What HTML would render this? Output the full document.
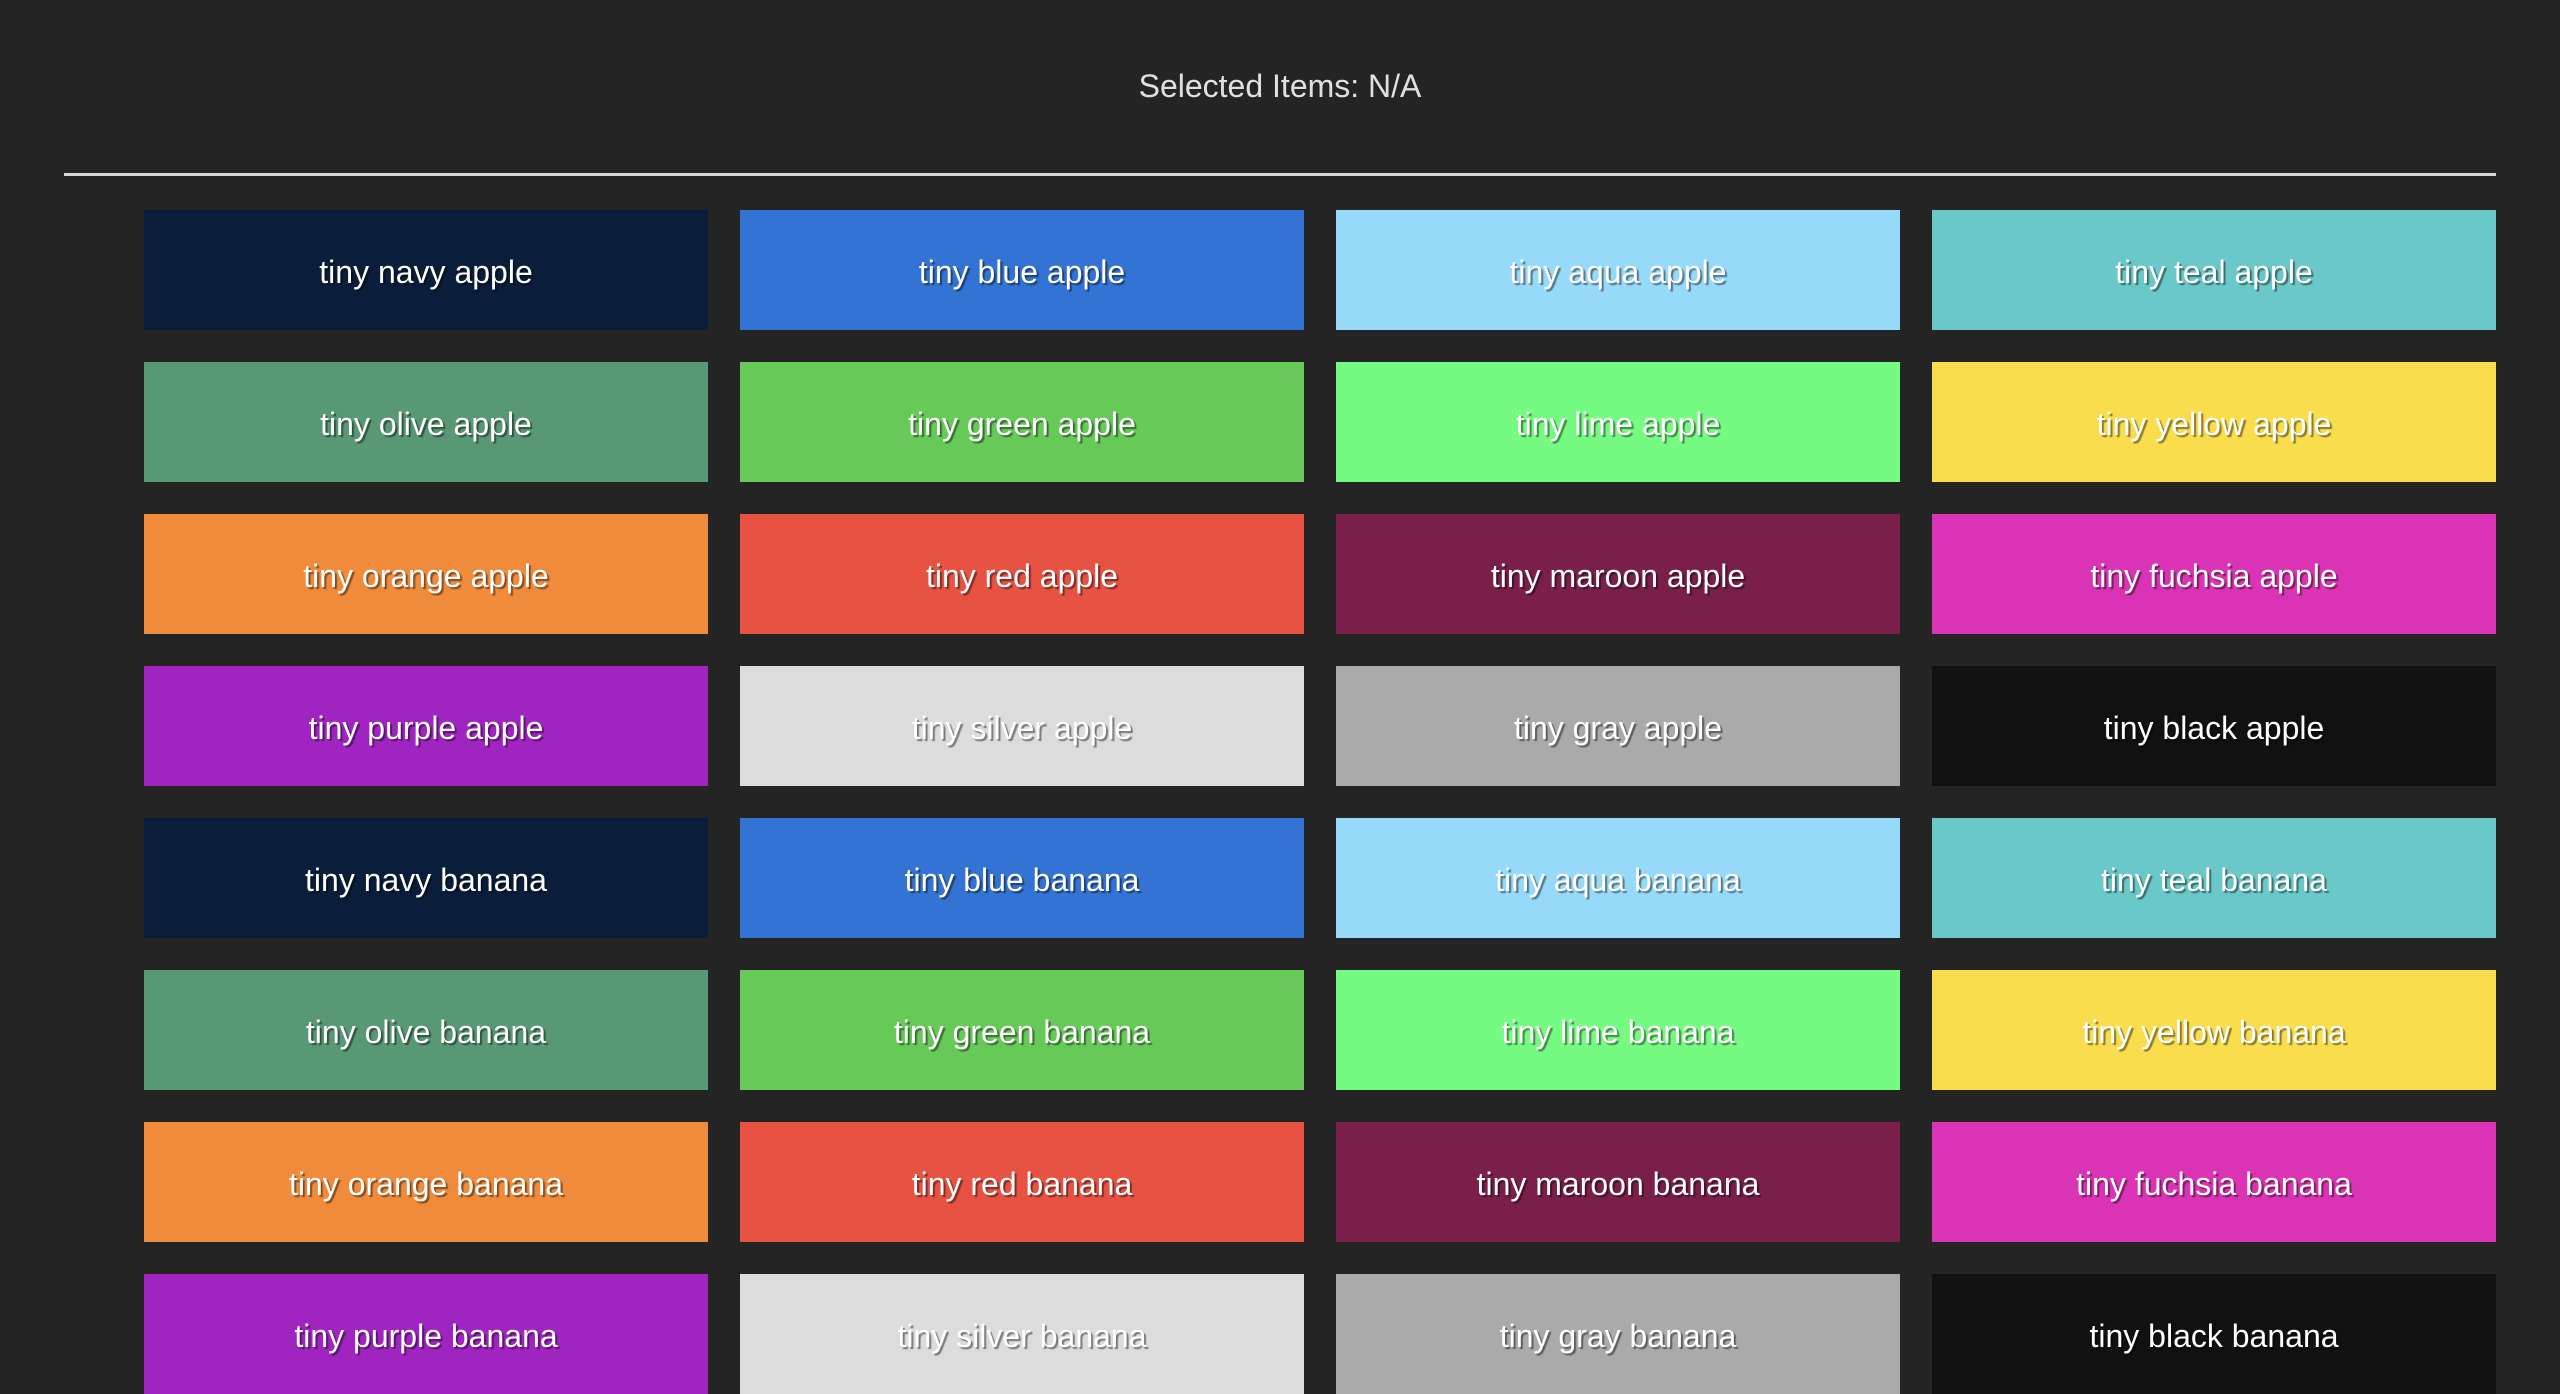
<!DOCTYPE html>
<html><head><meta charset="utf-8"><style>
html,body{margin:0;padding:0;background:#242424;width:2560px;height:1354px;overflow:hidden;font-family:"Liberation Sans",sans-serif;}
.hdr{position:absolute;top:62px;left:0;width:2560px;text-align:center;color:#e0e0e0;font-size:32px;line-height:48px;}
.line{position:absolute;left:64px;top:173px;width:2432px;height:3px;background:#d8d8d8;}
.grid{position:absolute;left:144px;top:210px;display:grid;grid-template-columns:repeat(4,564px);grid-auto-rows:120px;gap:32px;}
.t{display:flex;align-items:center;justify-content:center;color:#fff;font-size:32px;padding-top:4px;box-sizing:border-box;text-shadow:2px 2px 1px rgba(0,0,0,0.45);}
</style></head><body>
<div class="hdr">Selected Items: N/A</div>
<div class="line"></div>
<div class="grid">
<div class="t" style="background:#0a1e3c">tiny navy apple</div>
<div class="t" style="background:#3373d3">tiny blue apple</div>
<div class="t" style="background:#97d9f9">tiny aqua apple</div>
<div class="t" style="background:#6ac8c9">tiny teal apple</div>
<div class="t" style="background:#589875">tiny olive apple</div>
<div class="t" style="background:#66c958">tiny green apple</div>
<div class="t" style="background:#76fb82">tiny lime apple</div>
<div class="t" style="background:#f9dd4d">tiny yellow apple</div>
<div class="t" style="background:#ef8b3b">tiny orange apple</div>
<div class="t" style="background:#e85242">tiny red apple</div>
<div class="t" style="background:#7a1f4a">tiny maroon apple</div>
<div class="t" style="background:#da33b6">tiny fuchsia apple</div>
<div class="t" style="background:#a024c0">tiny purple apple</div>
<div class="t" style="background:#dcdcdc">tiny silver apple</div>
<div class="t" style="background:#aaaaaa">tiny gray apple</div>
<div class="t" style="background:#111111">tiny black apple</div>
<div class="t" style="background:#0a1e3c">tiny navy banana</div>
<div class="t" style="background:#3373d3">tiny blue banana</div>
<div class="t" style="background:#97d9f9">tiny aqua banana</div>
<div class="t" style="background:#6ac8c9">tiny teal banana</div>
<div class="t" style="background:#589875">tiny olive banana</div>
<div class="t" style="background:#66c958">tiny green banana</div>
<div class="t" style="background:#76fb82">tiny lime banana</div>
<div class="t" style="background:#f9dd4d">tiny yellow banana</div>
<div class="t" style="background:#ef8b3b">tiny orange banana</div>
<div class="t" style="background:#e85242">tiny red banana</div>
<div class="t" style="background:#7a1f4a">tiny maroon banana</div>
<div class="t" style="background:#da33b6">tiny fuchsia banana</div>
<div class="t" style="background:#a024c0">tiny purple banana</div>
<div class="t" style="background:#dcdcdc">tiny silver banana</div>
<div class="t" style="background:#aaaaaa">tiny gray banana</div>
<div class="t" style="background:#111111">tiny black banana</div>
</div>
</body></html>
